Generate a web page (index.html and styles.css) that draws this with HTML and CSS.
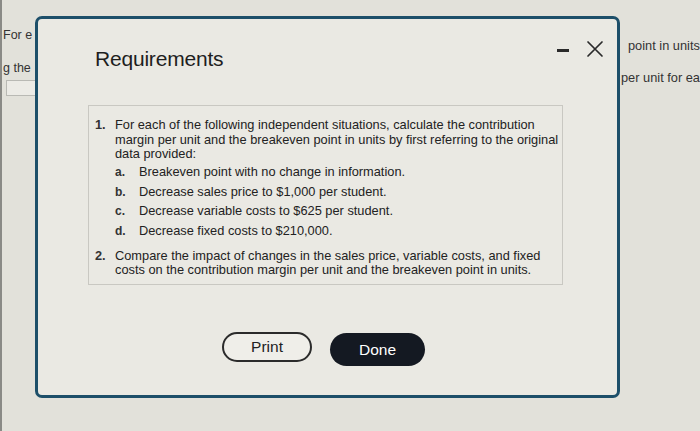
FILE: index.html
```html
<!DOCTYPE html>
<html>
<head>
<meta charset="utf-8">
<link rel="stylesheet" href="styles.css">
</head>
<body>
<div class="page">
  <div class="bg-left">
    <div class="bg-line l1">For e</div>
    <div class="bg-line l2">g the</div>
    <div class="bg-input"></div>
  </div>
  <div class="bg-right">
    <div class="bg-line r1">point in units</div>
    <div class="bg-line r2">per unit for ea</div>
  </div>
</div>

<div class="modal">
  <div class="modal-head">
    <h1 class="title">Requirements</h1>
    <div class="controls">
      <span class="minus"></span>
      <svg class="close" width="18" height="18" viewBox="0 0 18 18"><path d="M2 2 L16 16 M16 2 L2 16" stroke="#2a2a2a" stroke-width="1.7" fill="none" stroke-linecap="round"/></svg>
    </div>
  </div>
  <div class="content">
    <ol class="list">
      <li><span class="num">1.</span><div class="txt">For each of the following independent situations, calculate the contribution margin per unit and the breakeven point in units by first referring to the original data provided:
        <ol class="sub">
          <li><span class="let">a.</span>Breakeven point with no change in information.</li>
          <li><span class="let">b.</span>Decrease sales price to $1,000 per student.</li>
          <li><span class="let">c.</span>Decrease variable costs to $625 per student.</li>
          <li><span class="let">d.</span>Decrease fixed costs to $210,000.</li>
        </ol></div>
      </li>
      <li><span class="num">2.</span><div class="txt">Compare the impact of changes in the sales price, variable costs, and fixed costs on the contribution margin per unit and the breakeven point in units.</div></li>
    </ol>
  </div>
  <div class="buttons">
    <button class="btn print">Print</button>
    <button class="btn done">Done</button>
  </div>
</div>
</body>
</html>
```

FILE: styles.css
```css
html, body {
  margin: 0;
  padding: 0;
}
body {
  width: 700px;
  height: 431px;
  overflow: hidden;
  background: #e2e1da;
  font-family: "Liberation Sans", Arial, sans-serif;
  color: #222;
  position: relative;
}
.page {
  display: flex;
  justify-content: space-between;
  height: 431px;
  border-left: 2px solid #8a8a86;
  box-sizing: border-box;
}
.bg-left {
  padding-left: 1px;
  padding-top: 28px;
  font-size: 12.5px;
}
.bg-line { color: #333; line-height: 14px; }
.l2 { margin-top: 19px; }
.bg-input {
  margin-top: 5px;
  margin-left: 3px;
  width: 30px;
  height: 14px;
  border: 1px solid #b9b9b4;
  background: #ecebe6;
}
.bg-right {
  padding-top: 39px;
  width: 80px;
  font-size: 12.8px;
  white-space: nowrap;
  overflow: hidden;
}
.r1 { padding-left: 8px; }
.r2 { margin-top: 18px; padding-left: 1px; }

.modal {
  position: absolute;
  left: 35px;
  top: 16px;
  width: 585px;
  height: 382px;
  box-sizing: border-box;
  border: 3px solid #1d4f69;
  border-radius: 7px;
  background: #eae9e3;
  display: flex;
  flex-direction: column;
}
.modal-head {
  display: flex;
  justify-content: space-between;
  align-items: flex-start;
  padding: 21px 13px 0 57px;
  height: 86px;
  box-sizing: border-box;
}
.title {
  margin: 7px 0 0;
  font-weight: normal;
  font-size: 21px;
  color: #1e1e1e;
  letter-spacing: -0.2px;
}
.controls {
  display: flex;
  align-items: center;
  gap: 17px;
}
.minus {
  display: block;
  width: 12px;
  height: 3px;
  background: #2a2a2a;
  margin-top: 2px;
}
.content {
  margin-left: 50px;
  width: 475px;
  height: 180px;
  box-sizing: border-box;
  border: 1px solid #c9c8c2;
  padding: 12px 0 0 6px;
  font-size: 12.8px;
  line-height: 14.5px;
  color: #222;
}
.list, .sub {
  list-style: none;
  margin: 0;
  padding: 0;
}
.list > li {
  display: flex;
}
.num {
  width: 20px;
  flex: none;
  font-weight: bold;
  color: #333;
}
.sub { margin-top: 3.5px; }
.sub li { margin-bottom: 5px; display: flex; }
.let {
  width: 24px;
  flex: none;
  font-weight: bold;
  color: #333;
  font-size: 12px;
}
.list > li + li { margin-top: 5.5px; }
.buttons {
  display: flex;
  justify-content: center;
  gap: 18px;
  margin-top: 47px;
  padding-right: 8px;
}
.btn {
  font-family: "Liberation Sans", Arial, sans-serif;
  font-size: 15.5px;
  height: 30px;
  border-radius: 15px;
  box-sizing: border-box;
  cursor: pointer;
}
.print {
  width: 90px;
  border: 2px solid #2b2b2b;
  background: #efeee9;
  color: #222;
}
.done {
  width: 95px;
  height: 33px;
  border-radius: 17px;
  border: none;
  background: #141922;
  color: #fff;
  margin-top: 1px;
}
```
